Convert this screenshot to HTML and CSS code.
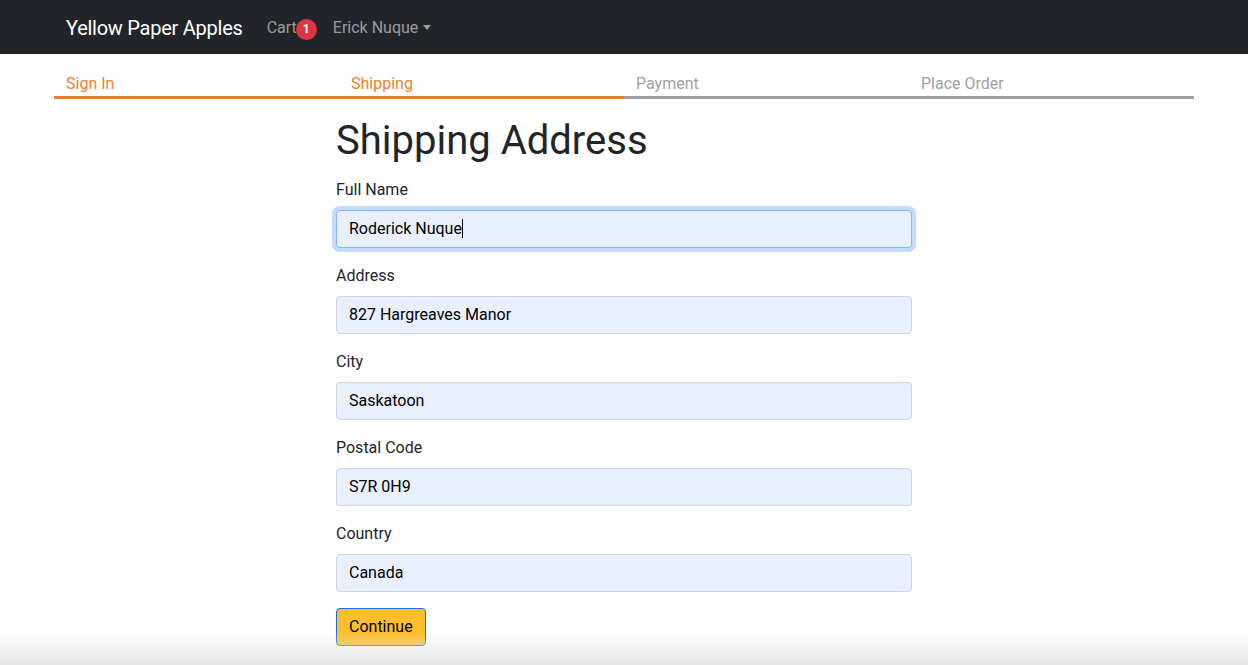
FILE: index.html
```html
<!DOCTYPE html>
<html lang="en">
<head>
<meta charset="utf-8">
<title>Shipping Address</title>
<link rel="stylesheet" href="styles.css">
</head>
<body>
<header class="navbar">
  <div class="container nav-inner">
    <a class="brand" href="#">Yellow Paper Apples</a>
    <nav class="nav-links">
      <a class="nav-link" href="#">Cart<span class="badge">1</span></a>
      <a class="nav-link dropdown" href="#">Erick Nuque<span class="caret"></span></a>
    </nav>
  </div>
</header>
<main class="container">
  <div class="steps">
    <div class="step active">Sign In</div>
    <div class="step active">Shipping</div>
    <div class="step">Payment</div>
    <div class="step">Place Order</div>
  </div>
  <div class="small-container">
    <h1>Shipping Address</h1>
    <form class="form">
      <div class="field">
        <label class="form-label" for="fullName">Full Name</label>
        <div class="form-control focused" id="fullName">Roderick Nuque<span class="cursor"></span></div>
      </div>
      <div class="field">
        <label class="form-label" for="address">Address</label>
        <div class="form-control" id="address">827 Hargreaves Manor</div>
      </div>
      <div class="field">
        <label class="form-label" for="city">City</label>
        <div class="form-control" id="city">Saskatoon</div>
      </div>
      <div class="field">
        <label class="form-label" for="postal">Postal Code</label>
        <div class="form-control" id="postal">S7R 0H9</div>
      </div>
      <div class="field">
        <label class="form-label" for="country">Country</label>
        <div class="form-control" id="country">Canada</div>
      </div>
      <div class="actions">
        <button class="btn-warning" type="button">Continue</button>
      </div>
    </form>
  </div>
</main>
<div class="bottom-fade"></div>
</body>
</html>
```
FILE: styles.css
```css
* { box-sizing: border-box; }
html, body { margin: 0; padding: 0; }
body {
  font-family: Roboto, "Liberation Sans", Arial, sans-serif;
  font-size: 16px;
  line-height: 1.5;
  color: #212529;
  background: #fff;
}
a { text-decoration: none; }
.container {
  width: 1140px;
  margin: 0 auto;
  padding: 0 12px;
}
.navbar {
  background: #212529;
  height: 54px;
}
.nav-inner {
  display: flex;
  align-items: center;
  height: 54px;
  padding-top: 2px;
}
.brand {
  color: #fff;
  font-size: 20px;
  letter-spacing: -0.25px;
  margin-right: 16px;
  line-height: 30px;
}
.nav-links { display: flex; align-items: center; }
.nav-link {
  color: rgba(255,255,255,.55);
  padding: 8px;
  display: flex;
  align-items: center;
}
.badge {
  display: inline-flex;
  align-items: center;
  justify-content: center;
  width: 21px;
  height: 21px;
  border-radius: 50%;
  background: #dc3545;
  color: #fff;
  font-size: 12px;
  font-weight: 700;
  margin-left: -1px;
  margin-top: 2px;
}
.caret {
  display: inline-block;
  margin-left: 5px;
  border-top: 5px solid rgba(255,255,255,.55);
  border-left: 4px solid transparent;
  border-right: 4px solid transparent;
  margin-top: -2px;
}
.steps {
  display: grid;
  grid-template-columns: repeat(4, 1fr);
  margin: 0 -12px;
  padding-top: 18px;
}
.step {
  padding: 0 12px;
  color: #a0a0a0;
  border-bottom: 3px solid #a0a0a0;
  line-height: 24px;
}
.step.active {
  color: #ee7f2d;
  border-bottom-color: #e97d2c;
}
.small-container {
  width: 576px;
  margin: 0 auto;
}
h1 {
  font-size: 40px;
  font-weight: 400;
  line-height: 48px;
  margin: 18px 0 13px;
}
.field { margin-bottom: 16px; }
.form-label {
  display: block;
  margin-bottom: 8px;
  line-height: 24px;
}
.form-control {
  height: 38px;
  padding: 6px 12px;
  border: 1px solid #ced4da;
  border-radius: 4px;
  background: #e8f0fe;
  color: #000;
  line-height: 24px;
}
.form-control.focused {
  border-color: #86b7fe;
  box-shadow: 0 0 0 4px rgba(13,110,253,.25);
}
.cursor {
  display: inline-block;
  width: 1px;
  height: 19px;
  background: #000;
  vertical-align: -4px;
}
.btn-warning {
  font-family: inherit;
  font-size: 16px;
  line-height: 24px;
  padding: 6px 12px;
  background: #fdbf2d;
  color: #000;
  border: 1px solid #1a6fe0;
  border-radius: 4px;
}
.bottom-fade {
  position: fixed;
  left: 0;
  right: 0;
  bottom: 0;
  height: 32px;
  pointer-events: none;
  background: linear-gradient(to bottom, rgba(230,230,230,0), rgba(228,228,228,1));
}
```
